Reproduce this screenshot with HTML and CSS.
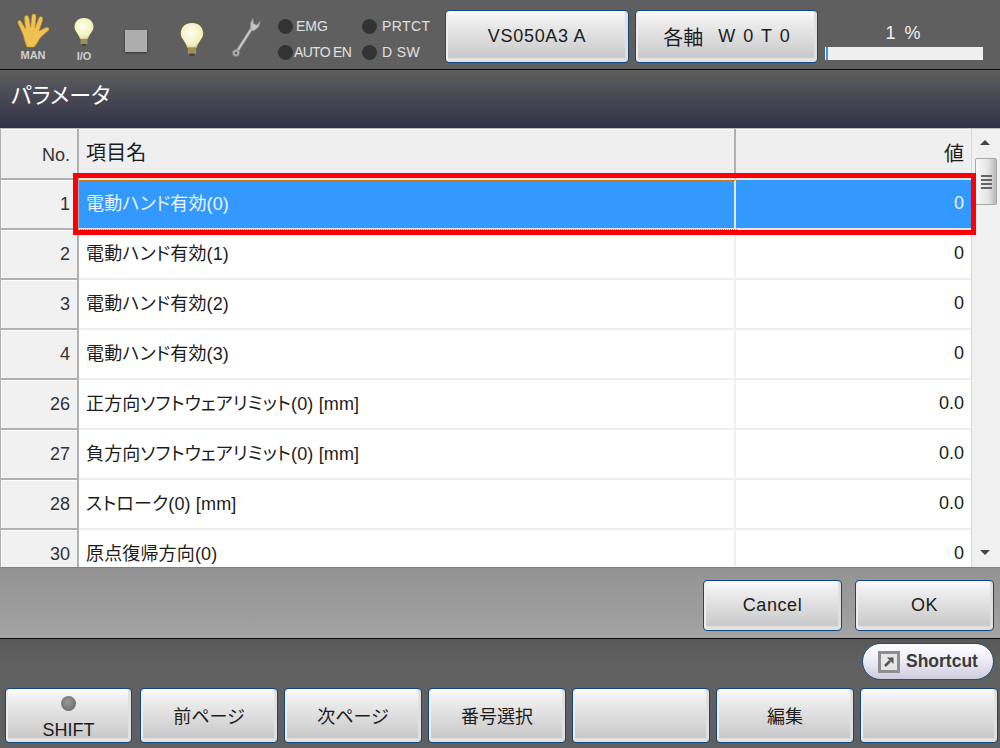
FILE: index.html
```html
<!DOCTYPE html>
<html lang="ja">
<head>
<meta charset="utf-8">
<title>パラメータ</title>
<link rel="stylesheet" href="styles.css">
</head>
<body>
<div class="app">
  <header class="topbar">
    <div class="ind ind-man">
      <svg width="36" height="34" viewBox="0 0 36 34"><path d="M8 20 L3 9 Q2.500 6.500 4.500 6.500 Q6 6.500 7 9 L10.500 15 L9.500 4 Q9.500 1.500 11.500 1.500 Q13.500 1.500 14 4 L15.500 14 L17 1.500 Q17.500 -0.500 19.500 0 Q21 0.500 21 3 L20 14 L24 4 Q25 2 26.500 2.800 Q28 3.500 27.500 6 L24 17 L30 14 Q33 13 34 14.500 Q34.500 16 32 17.500 L25 24 Q22 30 19 33 L12 33 Q9.500 27 8 20 Z" fill="#efc252" stroke="#c4962e" stroke-width=".6"/></svg>
      <span class="ind-label">MAN</span>
    </div>
    <div class="ind ind-io">
      <svg width="22" height="30" viewBox="0 0 22 30"><use href="#bulb"/></svg>
      <span class="ind-label">I/O</span>
    </div>
    <div class="stop"></div>
    <svg class="bulb-big" width="26" height="37" viewBox="0 0 22 30">
      <defs>
        <radialGradient id="glass" cx=".45" cy=".4" r=".7"><stop offset="0" stop-color="#fffff0"/><stop offset=".7" stop-color="#f3f0b8"/><stop offset="1" stop-color="#b5b184"/></radialGradient>
        <g id="bulb"><path d="M11 1 C5 1 1.500 5 1.500 10 C1.500 14.500 6 17 7 22 L15 22 C16 17 20.500 14.500 20.500 10 C20.500 5 17 1 11 1 Z" fill="url(#glass)"/><rect x="7.500" y="22" width="7" height="5" fill="#9c9257"/><rect x="9" y="27" width="4" height="2" fill="#45433a"/></g>
      </defs>
      <use href="#bulb"/>
    </svg>
    <svg class="wrench" width="30" height="42" viewBox="0 0 30 42"><path d="M5 36 L21 11" stroke="#7e7e7e" stroke-width="3.600" stroke-linecap="round"/><path d="M5 36 L21 11" stroke="#c8c8c8" stroke-width="2.200" stroke-linecap="round"/><path d="M20 13 Q18 6 22 1 L22.500 6.500 L26 8 L29 4 Q29.500 11 22 14 Z" fill="#c4c4c4" stroke="#808080" stroke-width=".5"/><circle cx="5" cy="36" r="3.400" fill="#c0c0c0" stroke="#808080"/><circle cx="5" cy="36" r="1.600" fill="#5f5f5f"/></svg>
    <div class="leds">
      <div class="led-item"><i class="led"></i><span class="led-text t-emg">EMG</span></div>
      <div class="led-item"><i class="led"></i><span class="led-text t-prt">PRTCT</span></div>
      <div class="led-item"><i class="led"></i><span class="led-text t-auto">AUTO EN</span></div>
      <div class="led-item"><i class="led"></i><span class="led-text t-prt">D SW</span></div>
    </div>
    <div class="btn btn-top btn-robot">VS050A3 A</div>
    <div class="btn btn-top btn-axis"><span class="axis-jp">各軸</span><span class="axis-code">W 0 T 0</span></div>
    <div class="speed">
      <div class="speed-label">1 %</div>
      <div class="speed-bar"><div class="speed-fill"></div></div>
    </div>
  </header>

  <div class="titlebar">パラメータ</div>

  <main class="table-wrap">
    <div class="grid">
      <div class="row row-head">
        <div class="cell c-no">No.</div>
        <div class="cell c-name">項目名</div>
        <div class="cell c-val">値</div>
      </div>
      <div class="row row-sel">
        <div class="cell c-no">1</div>
        <div class="cell c-name">電動ハンド有効(0)</div>
        <div class="cell c-val">0</div>
        <div class="sel-mark"></div>
      </div>
      <div class="row"><div class="cell c-no">2</div><div class="cell c-name">電動ハンド有効(1)</div><div class="cell c-val">0</div></div>
      <div class="row"><div class="cell c-no">3</div><div class="cell c-name">電動ハンド有効(2)</div><div class="cell c-val">0</div></div>
      <div class="row"><div class="cell c-no">4</div><div class="cell c-name">電動ハンド有効(3)</div><div class="cell c-val">0</div></div>
      <div class="row"><div class="cell c-no">26</div><div class="cell c-name">正方向ソフトウェアリミット(0) [mm]</div><div class="cell c-val">0.0</div></div>
      <div class="row"><div class="cell c-no">27</div><div class="cell c-name">負方向ソフトウェアリミット(0) [mm]</div><div class="cell c-val">0.0</div></div>
      <div class="row"><div class="cell c-no">28</div><div class="cell c-name">ストローク(0) [mm]</div><div class="cell c-val">0.0</div></div>
      <div class="row"><div class="cell c-no">30</div><div class="cell c-name">原点復帰方向(0)</div><div class="cell c-val">0</div></div>
    </div>
    <div class="scrollbar">
      <div class="arrow arrow-up"></div>
      <div class="thumb"><i></i><i></i><i></i><i></i></div>
      <div class="arrow arrow-down"></div>
    </div>
  </main>

  <div class="actions">
    <div class="btn btn-act">Cancel</div>
    <div class="btn btn-act">OK</div>
  </div>

  <footer class="bottom">
    <div class="shortcut-row">
      <div class="shortcut">
        <svg width="22" height="22" viewBox="0 0 22 22"><rect x="1.500" y="1.500" width="19" height="19" fill="#e6e6e6" stroke="#8e8e8e" stroke-width="3"/><path d="M7 15 L12 10" stroke="#555" stroke-width="2.500"/><path d="M9 6.500 L15.500 6.500 L15.500 13 Z" fill="#555"/></svg>
        <span>Shortcut</span>
      </div>
    </div>
    <div class="fkeys">
      <div class="btn fkey fkey-shift"><i class="shift-led"></i><span>SHIFT</span></div>
      <div class="btn fkey">前ページ</div>
      <div class="btn fkey">次ページ</div>
      <div class="btn fkey">番号選択</div>
      <div class="btn fkey"></div>
      <div class="btn fkey">編集</div>
      <div class="btn fkey"></div>
    </div>
  </footer>
</div>
</body>
</html>
```
FILE: styles.css
```css
* { box-sizing: border-box; }
html, body { margin: 0; padding: 0; }
body {
  width: 1000px;
  height: 748px;
  overflow: hidden;
  font-family: "Liberation Sans", "Noto Sans CJK JP", sans-serif;
  font-feature-settings: "palt";
  color: #1c1c1c;
  background: #5f5f5f;
}
.app { display: flex; flex-direction: column; width: 1000px; height: 748px; }

/* buttons */
.btn {
  display: flex;
  align-items: center;
  justify-content: center;
  border: 1px solid #12487e;
  border-radius: 4px;
  background: linear-gradient(#fdfdfd, #f0f0f0 15%, #c9c9c9 92%, #e2e2e2 93%);
  box-shadow: inset 2px 0 0 #eee, inset -3px 0 0 #e0e0e0;
  font-size: 18px;
  color: #1c1c1c;
}

/* top bar */
.topbar {
  flex: none;
  height: 70px;
  display: flex;
  align-items: flex-start;
  background: #5f5f5f;
  border-bottom: 1px solid #0c0c0c;
}
.ind { display: flex; flex-direction: column; align-items: center; width: 40px; }
.ind-man { margin: 14px 0 0 13px; }
.ind-io { margin: 17px 0 0 11px; }
.ind-label {
  font-size: 11px;
  font-weight: bold;
  line-height: 12px;
  color: #d0d0d0;
  margin-top: 1px;
}
.ind-io .ind-label { margin-top: 3px; }
.stop {
  width: 22px;
  height: 22px;
  margin: 30px 0 0 21px;
  background: #adadad;
  box-shadow: 0 1px 2px #333;
}
.bulb-big { margin: 21px 0 0 32px; }
.wrench { margin: 17px 0 0 26px; }
.leds {
  display: grid;
  grid-template-columns: 84px 78px;
  grid-auto-rows: 26px;
  margin: 13px 0 0 17px;
  width: 162px;
  flex: none;
}
.led-item { display: flex; align-items: center; }
.led { width: 15px; height: 15px; border-radius: 50%; background: #333; flex: none; }
.led-text { font-size: 14px; color: #e0e0e0; white-space: nowrap; }
.t-emg { margin-left: 3px; }
.t-prt { margin-left: 5px; letter-spacing: .4px; }
.t-auto { margin-left: 1px; letter-spacing: -.7px; }
.btn-top { height: 53px; margin: 10px 0 0 0; }
.btn-robot { width: 184px; margin-left: 5px; letter-spacing: .7px; }
.btn-axis { width: 183px; margin-left: 6px; font-size: 19px; gap: 15px; }
.axis-jp { font-size: 20px; }
.axis-code { font-size: 18px; word-spacing: 3px; }
.speed { width: 158px; margin: 23px 0 0 7px; }
.speed-label { text-align: center; font-size: 18px; line-height: 20px; color: #efefef; word-spacing: 4px; margin-right: 2px; height: 24px; }
.speed-bar { height: 13px; background: #efefef; }
.speed-fill { width: 2px; height: 13px; margin-left: 1px; background: #3399ff; }

/* title */
.titlebar {
  flex: none;
  height: 58px;
  padding: 9px 0 0 11px;
  background: linear-gradient(#5e5e5e, #31314a);
  color: #fff;
  font-size: 22px;
  line-height: 34px;
}

/* table */
.table-wrap {
  flex: none;
  height: 440px;
  display: flex;
  position: relative;
  overflow: hidden;
  background: #fff;
  border-top: 1px solid #bdbdbd;
  border-bottom: 1px solid #808080;
}
.grid { width: 971px; flex: none; }
.row {
  display: grid;
  grid-template-columns: 79px 657px 235px;
  height: 50px;
  position: relative;
}
.cell { display: flex; align-items: center; font-size: 18px; white-space: nowrap; }
.c-no {
  justify-content: flex-end;
  padding-right: 7px;
  background: #f1f1f1;
  border-left: 1px solid #b0b0b0;
  border-right: 2px solid #b0b0b0;
  border-bottom: 2px solid #b0b0b0;
  box-shadow: inset 1px 1px 0 #fff;
  color: #333;
}
.c-name { padding: 0 0 4px 7px; letter-spacing: .15px; border-right: 2px solid #efefef; border-bottom: 2px solid #efefef; }
.c-val { justify-content: flex-end; padding: 0 7px 2px 0; border-bottom: 2px solid #efefef; }
.row-head { height: 51px; }
.row-head .cell { background: #efefef; font-size: 20px; box-shadow: inset 0 1px 0 #fff; border-bottom: 2px solid #e8e8e8; }
.row-head .c-no { font-size: 18px; padding-top: 4px; border-bottom: 2px solid #b0b0b0; }
.row-head .c-name { border-right: 2px solid #b0b0b0; }
.row-sel .c-name, .row-sel .c-val {
  background: #3399ff;
  color: #eaf4ff;
  border-bottom: 2px solid #e8e8e8;
}
.row-sel .c-name { border-right: 2px solid #dfe9f5; }
.row-sel .c-name::after {
  content: "";
  position: absolute;
  left: 80px;
  top: 0;
  width: 655px;
  height: 48px;
  border: 1px dotted #c8741a;
}
.sel-mark {
  position: absolute;
  left: 73px;
  top: -7px;
  width: 903px;
  height: 62px;
  border: 5px solid #fb0007;
  z-index: 2;
}

/* scrollbar */
.scrollbar {
  flex: 1;
  position: relative;
  background: #f0f0f0;
  border-left: 1px solid #d8d8d8;
}
.arrow { position: absolute; left: 8px; width: 0; height: 0; border-left: 5px solid transparent; border-right: 5px solid transparent; }
.arrow-up { top: 11px; border-bottom: 5px solid #444; }
.arrow-down { bottom: 12px; border-top: 5px solid #444; }
.thumb {
  position: absolute;
  left: 3px;
  top: 29px;
  width: 22px;
  height: 47px;
  display: flex;
  flex-direction: column;
  align-items: center;
  justify-content: center;
  gap: 2px;
  border: 1px solid #a8a8a8;
  border-radius: 2px;
  background: linear-gradient(90deg, #f8f8f8, #e4e4e4 60%, #b8b8b8);
}
.thumb i { width: 11px; height: 2px; background: #666; }

/* actions */
.actions {
  flex: none;
  height: 71px;
  display: flex;
  justify-content: flex-end;
  gap: 13px;
  padding: 12px 6px 0 0;
  background: linear-gradient(#939393, #a3a3a3);
  border-bottom: 1px solid #0c0c0c;
}
.btn-act { width: 139px; height: 51px; letter-spacing: .6px; }

/* bottom */
.bottom { flex: 1; background: linear-gradient(#585858, #606060 20%); display: flex; flex-direction: column; }
.shortcut-row { display: flex; justify-content: flex-end; padding: 4px 6px 0 0; height: 49px; }
.shortcut {
  width: 132px;
  height: 37px;
  display: flex;
  align-items: center;
  gap: 6px;
  padding-left: 15px;
  border: 1px solid #1c4f85;
  border-radius: 19px;
  background: linear-gradient(#fdfdff, #eeeef6 45%, #cfcbe0);
  font-size: 17.500px;
  font-weight: bold;
  color: #3c3c3c;
}
.fkeys { display: flex; gap: 6px; padding-left: 5px; }
.fkey { width: 138px; height: 55px; flex: none; padding-bottom: 2px; }
.fkey-shift { width: 127px; margin-right: 2px; flex-direction: column; justify-content: flex-start; padding-top: 7px; }
.shift-led {
  width: 15px;
  height: 15px;
  border-radius: 50%;
  background: radial-gradient(circle at 45% 40%, #999, #5e5e5e);
}
.fkey-shift span { line-height: 20px; margin-top: 9px; }
```
